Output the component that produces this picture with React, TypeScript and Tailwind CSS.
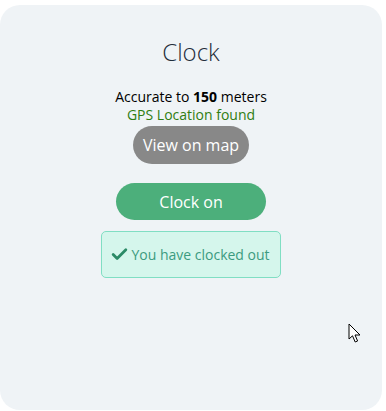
import { Check } from 'lucide-react';

export default function App() {
  return (
    <div className="relative w-[386px] h-[411px] bg-white pt-[5px]" style={{ fontFamily: '"Open Sans", sans-serif' }}>
      {/* Card */}
      <div className="w-[382px] h-[405px] rounded-[20px] bg-[#eff3f6] flex flex-col items-center pt-[31px]">
        <h1 className="text-[24px] leading-[32px] font-light text-[#1f2d3a]">Clock</h1>

        <div className="mt-[20px] flex flex-col items-center text-[14px] leading-[18px]">
          <p className="text-black">
            Accurate to <span className="font-bold">150</span> meters
          </p>
          <p className="text-[#2f7d12]">GPS Location found</p>
        </div>

        <button className="mt-[2px] w-[116px] h-[38px] rounded-full bg-[#888888] text-white text-[16px]">
          View on map
        </button>

        <button className="mt-[19px] w-[150px] h-[37px] rounded-full bg-[#4caf7b] text-white text-[16px]">
          Clock on
        </button>

        <div className="mt-[11px] w-[180px] h-[47px] rounded-[5px] border border-[#80dec3] bg-[#d5f6ec] flex items-center justify-center gap-[2px] text-[14px] text-[#3c9b80] pr-[2px]">
          <Check size={19} strokeWidth={3.5} className="text-[#2b8a66]" />
          <span>You have clocked out</span>
        </div>
      </div>

      {/* Mouse pointer */}
      <svg className="absolute left-[348px] top-[323px]" width="14" height="22" viewBox="0 0 14 22">
        <path d="M1 1 L1 16 L4.5 12.8 L7.2 19 L9.6 18 L7 12 L12 12 Z" fill="white" stroke="black" strokeWidth="1" strokeLinejoin="miter" />
      </svg>
    </div>
  );
}
